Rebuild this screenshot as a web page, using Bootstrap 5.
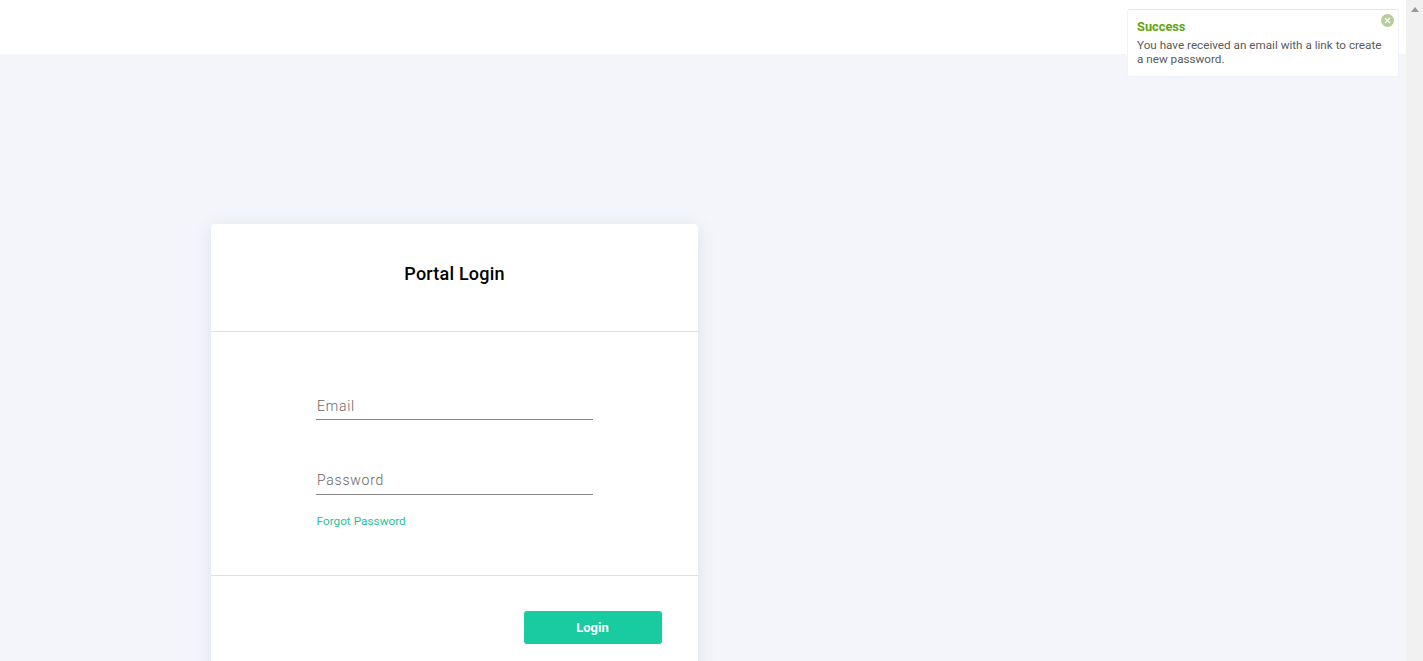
<!DOCTYPE html>
<html lang="en"><head><meta charset="utf-8"><title>Portal Login</title>
<link href="https://cdn.jsdelivr.net/npm/bootstrap@5.3.0/dist/css/bootstrap.min.css" rel="stylesheet">
<style>
html,body{height:661px;overflow:hidden}
body{background:#f3f5fa;font-family:Roboto,sans-serif;color:#000}
.shell{width:1406px;height:661px;overflow:hidden;position:relative}
.topbar{height:54px;background:#fff}
.login-wrap{padding:170px 0 0 211px}
.login-box{width:487px;background:#fff;border-radius:4px;box-shadow:0 4px 18px rgba(80,90,130,.13)}
.login-head{height:108px;border-bottom:1px solid #e0e0e0;padding-top:37px;text-align:center}
.login-head h1{font-size:18px;font-weight:500;line-height:25px;margin:0;color:#000;letter-spacing:.2px}
.login-body{height:244px;border-bottom:1px solid #e0e0e0;padding:61px 105px 0}
.field{height:27px;border:0;border-bottom:1px solid #888;border-radius:0;padding:0 0 1px 1px;width:100%;font:300 14px Roboto,sans-serif;letter-spacing:.75px;background:transparent;display:block;outline:0}
.field::placeholder{color:#666;opacity:1}
.field.second{margin-top:48px;padding-bottom:3px}
.forgot{display:block;margin-top:20px;font-size:11.8px;line-height:12px;color:#2bbf98;text-decoration:none;padding-left:.5px}
.login-foot{padding:35px 36px 20px;height:120px}
.login-btn{width:138px;height:33px;background:#19cba0;color:#fff;font-size:13px;font-weight:700;border:0;border-radius:3px;padding:0 1px 0 0}
.toast-box{position:absolute;left:1127px;top:9px;width:272px;height:68px;background:#fff;border:1px solid #edf3f8;border-top-color:#d3efe4;border-radius:3px;padding:9px;font-size:11.7px;line-height:14px;color:#5a5a5a}
.toast-box strong{display:block;color:#62a510;font-size:12.8px;line-height:15px;margin-bottom:4px;font-weight:700}
.toast-x{position:absolute;right:4px;top:4px;width:13px;height:13px;display:block}
.sbar{position:absolute;right:0;top:0;width:17px;height:661px;background:#f1f1f1}
.sbar svg{display:block;margin:7px auto 0}
</style></head><body>
<div class="shell">
<div class="topbar"></div>
<div class="login-wrap"><div class="login-box">
<div class="login-head"><h1>Portal Login</h1></div>
<div class="login-body">
<input class="field" placeholder="Email">
<input class="field second" placeholder="Password">
<a class="forgot" href="#">Forgot Password</a>
</div>
<div class="login-foot d-flex justify-content-end align-items-start"><button class="login-btn btn" type="button">Login</button></div>
</div></div>
</div>
<div class="toast-box"><strong>Success</strong>You have received an email with a link to create a new password.
<svg class="toast-x" viewBox="0 0 13 13"><circle cx="6.5" cy="6.5" r="6.5" fill="#b3cf96"/><path d="M4 4l5 5M9 4l-5 5" stroke="#fff" stroke-width="1.6"/></svg></div>
<div class="sbar"><svg width="8" height="5" viewBox="0 0 8 5"><path d="M4 0l4 5H0z" fill="#999"/></svg></div>
<script src="https://cdn.jsdelivr.net/npm/bootstrap@5.3.0/dist/js/bootstrap.bundle.min.js"></script>
</body></html>
